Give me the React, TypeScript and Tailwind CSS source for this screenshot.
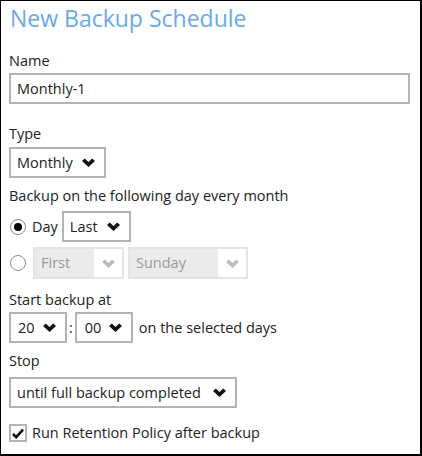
import * as React from 'react';

const Chevron = ({ muted = false }: { muted?: boolean }) => (
  <svg width="13" height="9" viewBox="0 0 13 9" className="shrink-0">
    <path
      d="M0 3 L2.8 0.4 L6.5 4 L10.2 0.4 L13 3 L6.5 9 Z"
      fill={muted ? '#bcbcbc' : '#111'}
    />
  </svg>
);

const Select = ({ value, className = '' }: { value: string; className?: string }) => (
  <div
    className={`h-[31px] border-2 border-[#b4b4b4] bg-white flex items-center justify-between pl-[6px] pr-[9px] ${className}`}
  >
    <span>{value}</span>
    <Chevron />
  </div>
);

const DisabledSelect = ({ value, className = '' }: { value: string; className?: string }) => (
  <div className={`h-[32px] border-2 border-[#e4e4e4] bg-[#ebebeb] flex items-stretch ${className}`}>
    <span className="flex-1 flex items-center pl-[6px] text-[#9a9a9a]">{value}</span>
    <span className="w-[28px] bg-white flex items-center justify-center">
      <Chevron muted />
    </span>
  </div>
);

const Radio = ({ checked = false }: { checked?: boolean }) => (
  <span className="w-[16px] h-[16px] rounded-full border border-[#8a8a8a] bg-white flex items-center justify-center shrink-0">
    {checked && <span className="w-[8px] h-[8px] rounded-full bg-black" />}
  </span>
);

export default function App() {
  return (
    <div className="w-[422px] h-[456px] bg-white border-t border-l border-r-2 border-b-2 border-black font-['Open_Sans',sans-serif] text-[14.5px] leading-[20px] text-[#222] px-[8px] overflow-hidden">
      <h1 className="text-[23px] leading-[32px] text-[#6aaae8] pt-[1px] ml-[1px]">New Backup Schedule</h1>

      <div className="mt-[17px]">Name</div>
      <div className="mt-[2px] h-[31px] w-[401px] border-2 border-[#b4b4b4] flex items-center pl-[6px]">
        Monthly-1
      </div>

      <div className="mt-[20px]">Type</div>
      <Select value="Monthly" className="mt-[3px] w-[97px]" />

      <div className="mt-[8px]">Backup on the following day every month</div>
      <div className="mt-[5px] flex items-center">
        <span className="ml-[1px]"><Radio checked /></span>
        <span className="ml-[6px]">Day</span>
        <Select value="Last" className="ml-[4px] w-[69px]" />
      </div>
      <div className="mt-[5px] flex items-center">
        <span className="ml-[1px]"><Radio /></span>
        <DisabledSelect value="First" className="ml-[7px] w-[91px]" />
        <DisabledSelect value="Sunday" className="ml-[4px] w-[120px]" />
      </div>

      <div className="mt-[11px]">Start backup at</div>
      <div className="mt-[2px] flex items-center">
        <Select value="20" className="w-[58px] pl-[7px]" />
        <span className="mx-[2px]">:</span>
        <Select value="00" className="w-[58px] pl-[8px]" />
        <span className="ml-[6px]">on the selected days</span>
      </div>

      <div className="mt-[8px]">Stop</div>
      <Select value="until full backup completed" className="mt-[6px] w-[228px]" />

      <div className="mt-[15px] flex items-center">
        <span className="w-[18px] h-[18px] border-2 border-[#b4b4b4] bg-white flex items-center justify-center shrink-0">
          <svg width="12" height="11" viewBox="0 0 12 11">
            <path d="M1 6 L4.2 9.2 L11 1.6" fill="none" stroke="#111" strokeWidth="2.6" />
          </svg>
        </span>
        <span className="ml-[5px]">Run Retention Policy after backup</span>
      </div>
    </div>
  );
}
